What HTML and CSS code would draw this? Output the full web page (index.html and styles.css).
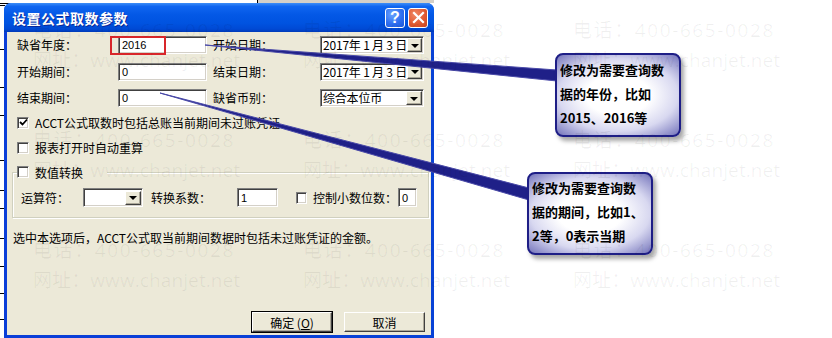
FILE: index.html
```html
<!DOCTYPE html>
<html lang="zh-CN">
<head>
<meta charset="utf-8">
<title>设置公式取数参数</title>
<link rel="stylesheet" href="styles.css">
</head>
<body>
<div class="page">
  <div class="dialog">
    <div class="titlebar">
      <span class="title">设置公式取数参数</span>
      <div class="tb-buttons">
        <span class="tb-btn help">?</span>
        <span class="tb-btn close"><svg width="13" height="13" viewBox="0 0 13 13"><path d="M2 2 L11 11 M11 2 L2 11" stroke="#fff" stroke-width="2.2" stroke-linecap="square"/></svg></span>
      </div>
    </div>
    <div class="frame">
      <div class="body">
        <div class="form">
          <span class="lbl">缺省年度：</span>
          <div class="field input hl-wrap"><span class="val">2016</span><span class="highlight"></span></div>
          <span class="lbl lbl2">开始日期：</span>
          <div class="field combo"><span class="val cjk">2017年 1 月 3 日</span><span class="drop"><i></i></span></div>

          <span class="lbl">开始期间：</span>
          <div class="field input"><span class="val">0</span></div>
          <span class="lbl lbl2">结束日期：</span>
          <div class="field combo"><span class="val cjk">2017年 1 月 3 日</span><span class="drop"><i></i></span></div>

          <span class="lbl">结束期间：</span>
          <div class="field input"><span class="val">0</span></div>
          <span class="lbl lbl2">缺省币别：</span>
          <div class="field combo"><span class="val cjk">综合本位币</span><span class="drop"><i></i></span></div>
        </div>

        <div class="check-row first"><span class="cb checked"><svg width="9" height="9" viewBox="0 0 9 9"><path d="M1 4 L3.5 6.5 L8 1.5" fill="none" stroke="#000" stroke-width="1.8"/></svg></span><span>ACCT公式取数时包括总账当前期间未过账凭证</span></div>
        <div class="check-row"><span class="cb"></span><span>报表打开时自动重算</span></div>

        <fieldset class="group">
          <legend class="legend"><span class="cb"></span><span>数值转换</span></legend>
          <div class="group-row">
            <span class="g-lbl1">运算符：</span>
            <div class="field combo small"><span class="val"></span><span class="drop"><i></i></span></div>
            <span class="g-lbl2">转换系数：</span>
            <div class="field input coef"><span class="val">1</span></div>
            <span class="cb g-cb"></span>
            <span class="g-lbl3">控制小数位数：</span>
            <div class="field input digits"><span class="val">0</span></div>
          </div>
        </fieldset>

        <p class="info">选中本选项后，ACCT公式取当前期间数据时包括未过账凭证的金额。</p>

        <div class="actions">
          <span class="btn default">确定 (<u>O</u>)</span>
          <span class="btn">取消</span>
        </div>
      </div>
    </div>
  </div>

  <svg class="pointers" width="832" height="338" viewBox="0 0 832 338">
    <polygon points="205,45 557,70 557,81" fill="#1f2088" stroke="#4a4aa8" stroke-width="1"/>
    <polygon points="160,93 529,188 529,200" fill="#1f2088" stroke="#4a4aa8" stroke-width="1"/>
  </svg>

  <div class="callout c1">修改为需要查询数<br>据的年份，比如<br>2015、2016等</div>
  <div class="callout c2">修改为需要查询数<br>据的期间，比如1、<br>2等，0表示当期</div>

  <div class="watermark">
    <div class="wm"><span class="tel">电话：400-665-0028</span><span class="web">网址：www.chanjet.net</span></div>
    <div class="wm"><span class="tel">电话：400-665-0028</span><span class="web">网址：www.chanjet.net</span></div>
    <div class="wm"><span class="tel">电话：400-665-0028</span><span class="web">网址：www.chanjet.net</span></div>
    <div class="wm"><span class="tel">电话：400-665-0028</span><span class="web">网址：www.chanjet.net</span></div>
    <div class="wm"><span class="tel">电话：400-665-0028</span><span class="web">网址：www.chanjet.net</span></div>
    <div class="wm"><span class="tel">电话：400-665-0028</span><span class="web">网址：www.chanjet.net</span></div>
    <div class="wm"><span class="tel">电话：400-665-0028</span><span class="web">网址：www.chanjet.net</span></div>
    <div class="wm"><span class="tel">电话：400-665-0028</span><span class="web">网址：www.chanjet.net</span></div>
    <div class="wm"><span class="tel">电话：400-665-0028</span><span class="web">网址：www.chanjet.net</span></div>
  </div>
</div>
</body>
</html>
```

FILE: styles.css
```css
* { box-sizing: border-box; }
html, body { margin: 0; padding: 0; }
body { background: #fff; }

.page {
  position: relative;
  width: 832px;
  height: 338px;
  overflow: hidden;
  background-color: #fff;
  background-image:
    linear-gradient(#000, #000),
    linear-gradient(#000, #000),
    linear-gradient(#d4d0c8, #d4d0c8),
    linear-gradient(to bottom,
      transparent 0 5px, #000 5px 6px,
      transparent 6px 49px, #000 49px 50px,
      transparent 50px 87px, #000 87px 88px,
      transparent 88px 115px, #000 115px 116px,
      transparent 116px 160px, #000 160px 161px,
      transparent 161px 190px, #000 190px 191px,
      transparent 191px 208px, #000 208px 209px,
      transparent 209px 238px, #000 238px 239px,
      transparent 239px 266px, #000 266px 267px,
      transparent 267px 293px, #000 293px 294px,
      transparent 294px 319px, #000 319px 320px,
      transparent 320px);
  background-size: 256px 1px, 1px 4px, 176px 3px, 5px 338px;
  background-position: 0 3px, 257px 0, 258px 0, 0 0;
  background-repeat: no-repeat;
  font-family: "Noto Sans CJK SC", "Liberation Sans", sans-serif;
  font-size: 12px;
  color: #000;
}

/* ---------- dialog ---------- */
.dialog {
  margin: 3px 0 0 4px;
  width: 430px;
  height: 335px;
  display: flex;
  flex-direction: column;
  border-radius: 7px 7px 0 0;
  overflow: hidden;
  background: #0842d6;
}

.titlebar {
  height: 29px;
  flex: none;
  display: flex;
  align-items: center;
  justify-content: space-between;
  padding: 0 6px 0 8px;
  background: linear-gradient(to bottom, #3d8ef7 0%, #1066f0 12%, #0358e6 40%, #0053e0 70%, #0049d4 90%, #003ab8 100%);
}
.title {
  color: #fff;
  font-weight: bold;
  font-size: 14px;
  letter-spacing: 0.5px;
  text-shadow: 1px 1px 0 #0a2a9a;
}
.tb-buttons { display: flex; gap: 3px; }
.tb-btn {
  width: 20px;
  height: 20px;
  border: 1px solid #fff;
  border-radius: 3px;
  display: flex;
  align-items: center;
  justify-content: center;
  color: #fff;
  font-family: "Liberation Sans", sans-serif;
  font-weight: bold;
  font-size: 16px;
}
.help { background: radial-gradient(circle at 35% 30%, #6aa3ff 0%, #2f6ff0 55%, #1c56d8 100%); }
.close { background: radial-gradient(circle at 35% 30%, #f08a68 0%, #e15a32 55%, #c8431e 100%); }

.frame {
  flex: 1;
  padding: 0 3px 3px;
  display: flex;
  background: linear-gradient(to right, #0a3ed8, #0842d6);
}
.body {
  flex: 1;
  background: #ece9d8;
  display: flex;
  flex-direction: column;
}

/* ---------- form ---------- */
.form {
  display: grid;
  grid-template-columns: 101px 89px 113px 104px;
  grid-auto-rows: 18px;
  row-gap: 8.5px;
  padding: 4px 0 0 10px;
  align-items: center;
}
.lbl { white-space: nowrap; line-height: 18px; }
.lbl2 { padding-left: 6px; }

.field {
  position: relative;
  height: 18px;
  background: #fff;
  border-top: 1px solid #808080;
  border-left: 1px solid #808080;
  border-right: 1px solid #fff;
  border-bottom: 1px solid #fff;
  box-shadow: inset 1px 1px 0 #404040, inset -1px -1px 0 #d4d0c8;
  display: flex;
  align-items: center;
  overflow: visible;
}
.val {
  padding-left: 3px;
  font-family: "Liberation Sans", sans-serif;
  font-size: 11px;
  line-height: 14px;
  flex: 1;
  white-space: nowrap;
}
.val.cjk { font-family: "Noto Sans CJK SC", sans-serif; font-size: 12px; padding-left: 2px; letter-spacing: -0.2px; }

.highlight {
  position: absolute;
  left: -9px;
  top: -1px;
  width: 56px;
  height: 19px;
  border: 2px solid #d8262a;
}

.drop {
  width: 16px;
  height: 14px;
  margin-right: 1px;
  background: #ece9d8;
  border-top: 1px solid #fff;
  border-left: 1px solid #fff;
  border-right: 1px solid #404040;
  border-bottom: 1px solid #404040;
  box-shadow: inset -1px -1px 0 #aca899;
  display: flex;
  align-items: center;
  justify-content: center;
}
.drop i {
  width: 0;
  height: 0;
  border-left: 4px solid transparent;
  border-right: 4px solid transparent;
  border-top: 4px solid #000;
  margin-top: 1px;
}

/* ---------- checkboxes ---------- */
.check-row {
  height: 25px;
  display: flex;
  align-items: center;
  gap: 6px;
  padding-left: 10px;
  white-space: nowrap;
}
.check-row.first { margin-top: 3px; }

.cb {
  flex: none;
  width: 12px;
  height: 12px;
  background: #fff;
  border-top: 1px solid #808080;
  border-left: 1px solid #808080;
  border-right: 1px solid #fff;
  border-bottom: 1px solid #fff;
  box-shadow: inset 1px 1px 0 #404040, inset -1px -1px 0 #d4d0c8;
  display: flex;
  align-items: center;
  justify-content: center;
}

/* ---------- group ---------- */
.group {
  margin: 2px 0 0 5px;
  width: 417px;
  padding: 0 0 10px 0;
  border: 1px solid #d0d0bf;
  box-shadow: 1px 1px 0 #fff, inset 1px 1px 0 #fff;
  min-width: 0;
}
.legend {
  margin-left: 4px;
  padding: 0;
  width: 90px;
  height: 20px;
  display: flex;
  align-items: center;
  gap: 6px;
  background: #ece9d8;
}
.group-row {
  margin-top: 6px;
  height: 19px;
  display: flex;
  align-items: center;
  padding-left: 8px;
  white-space: nowrap;
}
.group-row .field { height: 19px; }
.g-lbl1 { width: 62px; }
.combo.small { width: 60px; }
.g-lbl2 { margin-left: 8px; width: 86px; }
.coef { width: 41px; }
.g-cb { margin-left: 18px; width: 11px; height: 12px; }
.g-lbl3 { margin-left: 6px; width: 85px; }
.digits { width: 19px; }

.info {
  margin: 12px 0 0 6px;
  line-height: 16px;
  white-space: nowrap;
}

/* ---------- buttons ---------- */
.actions {
  margin-top: auto;
  margin-bottom: 3px;
  display: flex;
  justify-content: flex-end;
  gap: 12px;
  padding-right: 6px;
}
.btn {
  width: 81px;
  height: 20px;
  display: flex;
  align-items: center;
  justify-content: center;
  background: #ece9d8;
  border-top: 1px solid #fff;
  border-left: 1px solid #fff;
  border-right: 1px solid #404040;
  border-bottom: 1px solid #404040;
  box-shadow: inset -1px -1px 0 #aca899;
}
.btn.default {
  width: 80px;
  outline: 1px solid #000;
  outline-offset: 0;
  border-color: #fff #404040 #404040 #fff;
}
.btn u { text-decoration: underline; }

/* ---------- annotations ---------- */
.pointers {
  position: absolute;
  left: 0;
  top: 0;
  pointer-events: none;
}

.callout {
  position: absolute;
  width: 126px;
  height: 84px;
  border: 2px solid #1e1e86;
  border-radius: 8px;
  background: radial-gradient(ellipse 75% 70% at 50% 50%, #ffffff 0%, #ffffff 35%, #d8d8f0 65%, #8c8cc8 90%, #6a6ab4 100%);
  box-shadow: 3px 4px 4px rgba(0, 0, 0, 0.35);
  font-family: "Noto Sans CJK SC", sans-serif;
  font-weight: bold;
  font-size: 13px;
  line-height: 24px;
  color: #000;
  white-space: nowrap;
}
.c1 { left: 555px; top: 53px; padding: 3px 0 0 3px; }
.c2 { left: 527px; top: 172px; height: 83px; padding: 2px 0 0 3px; }

.watermark {
  position: absolute;
  left: 0;
  top: 0;
  width: 832px;
  height: 338px;
  display: grid;
  grid-template-columns: repeat(3, 270px);
  grid-auto-rows: 110px;
  padding: 15px 0 0 33px;
  pointer-events: none;
  font-family: "Open Sans", "Noto Sans CJK SC", sans-serif;
  font-size: 19px;
  line-height: 30px;
  color: rgba(0, 0, 0, 0.06);
}
.wm { display: flex; flex-direction: column; white-space: nowrap; }
.tel { letter-spacing: 1.6px; }
.web { letter-spacing: 0.1px; }
```
